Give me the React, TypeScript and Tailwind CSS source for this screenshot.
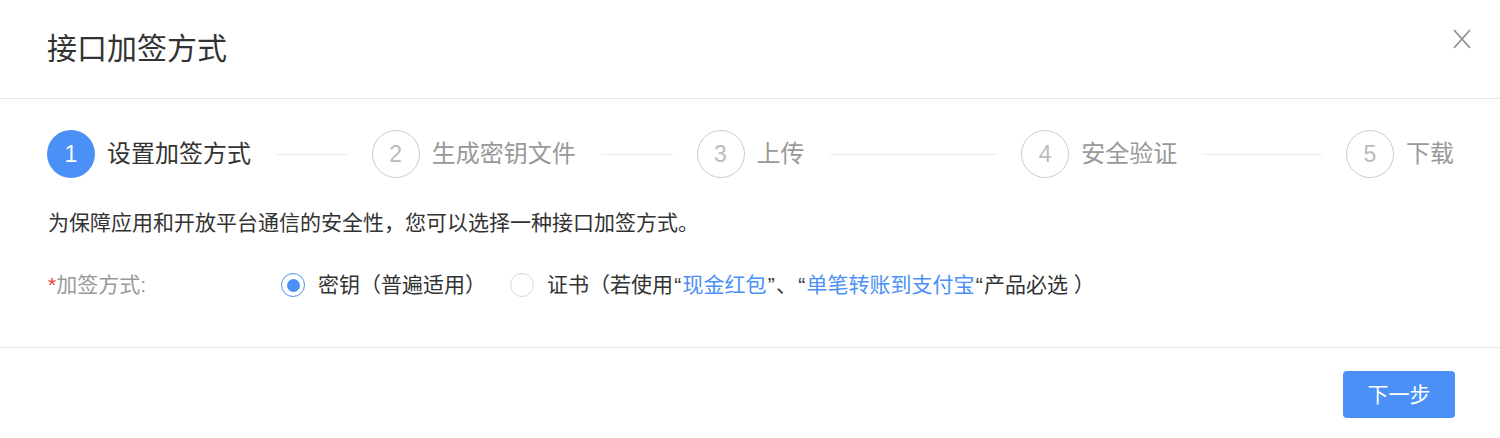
import React from "react";

const FONT = {
  fontFamily: '"Liberation Sans", "Noto Sans CJK SC", sans-serif',
};

const steps = ["设置加签方式", "生成密钥文件", "上传", "安全验证", "下载"];

function Step({ index, title, last }: { index: number; title: string; last: boolean }) {
  const active = index === 0;
  return (
    <div
      className={`${last ? "flex-none" : "flex-1"} ${index > 0 ? "pl-[24px]" : ""} flex items-center min-w-0 overflow-hidden`}
    >
      <div
        className={`w-[48px] h-[48px] flex-none rounded-full flex items-center justify-center text-[23px] leading-none ${
          active ? "bg-[#4a90f6] text-white" : "border-[1.5px] border-[#cccccc] text-[#bbbbbb]"
        }`}
      >
        {index + 1}
      </div>
      <div
        className={`ml-[12px] text-[24px] leading-[32px] whitespace-nowrap ${
          active ? "text-[#333333]" : "text-[#999999]"
        }`}
      >
        {title}
      </div>
      {!last && <div className="flex-1 h-px bg-[#ececec] ml-[25px]" />}
    </div>
  );
}

function Q({ c }: { c: string }) {
  return <span className="px-[1.25px]">{c}</span>;
}

export default function App() {
  return (
    <div className="w-[1500px] h-[438px] bg-white overflow-hidden" style={FONT}>
      {/* Header */}
      <div className="h-[99px] border-b border-[#e9e9e9] flex items-center justify-between pl-[47px] pr-[29px]">
        <div className="text-[30px] leading-[40px] text-[#333333] pb-[1px]">接口加签方式</div>
        <svg width="18" height="20" viewBox="0 0 18 20" className="mb-[20px]">
          <path d="M1 1 L17 19 M17 1 L1 19" stroke="#8c8c8c" strokeWidth="1.6" fill="none" />
        </svg>
      </div>

      {/* Body */}
      <div className="pl-[47px] pr-[46px] pt-[31px] pb-[47px] border-b border-[#e9e9e9]">
        <div className="flex items-center">
          {steps.map((t, i) => (
            <Step key={i} index={i} title={t} last={i === steps.length - 1} />
          ))}
        </div>

        <div className="mt-[30px] pl-[1px] text-[21px] leading-[30px] text-[#333333]">
          为保障应用和开放平台通信的安全性，您可以选择一种接口加签方式。
        </div>

        <div className="mt-[32px] flex items-center text-[21px] leading-[30px]">
          <div className="w-[234px] flex-none text-[#999999] pl-[1px]">
            <span className="text-[#f04134]">*</span>加签方式:
          </div>
          <label className="flex items-center">
            <span className="w-[24px] h-[24px] rounded-full border-[1.5px] border-[#4a90f6] flex items-center justify-center">
              <span className="w-[13px] h-[13px] rounded-full bg-[#4a90f6]" />
            </span>
            <span className="ml-[13px] text-[#333333]">密钥（普遍适用）</span>
          </label>
          <label className="flex items-center ml-[24px]">
            <span className="w-[24px] h-[24px] rounded-full border-[1.5px] border-[#d9d9d9] bg-white" />
            <span className="ml-[13px] text-[#333333] whitespace-nowrap">
              证书（若使用<Q c="“" />
              <span className="text-[#4a90f6]">现金红包</span>
              <Q c="”" />、<Q c="“" />
              <span className="text-[#4a90f6]">单笔转账到支付宝</span>
              <Q c="“" />产品必选 ）
            </span>
          </label>
        </div>
      </div>

      {/* Footer */}
      <div className="flex justify-end pt-[23px] pr-[45px]">
        <button className="w-[112px] h-[47px] rounded-[4px] bg-[#4a90f6] text-white text-[21px] leading-none">
          下一步
        </button>
      </div>
    </div>
  );
}
